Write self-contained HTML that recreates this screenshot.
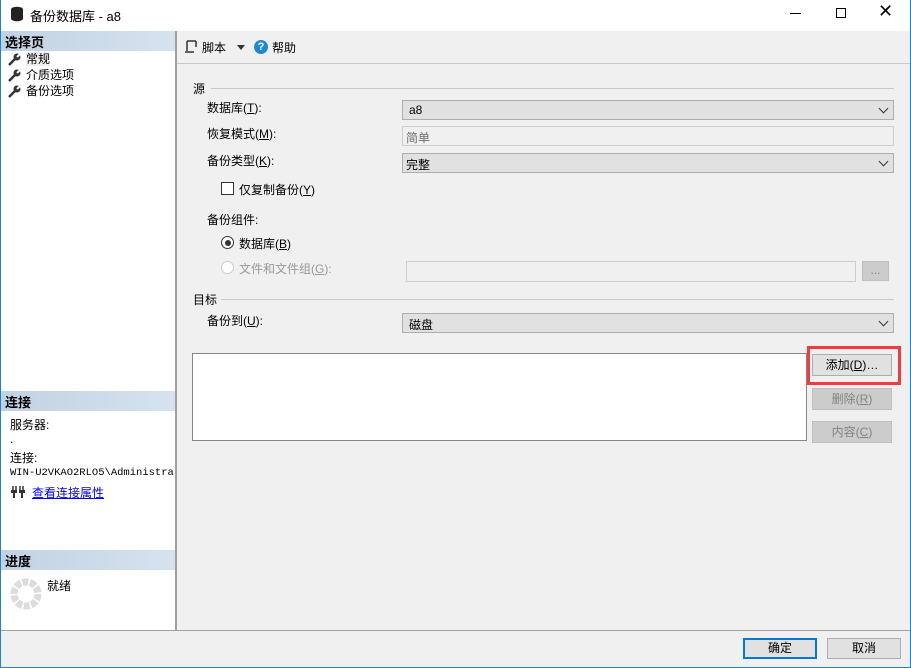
<!DOCTYPE html>
<html><head><meta charset="utf-8"><style>
*{box-sizing:border-box;margin:0;padding:0}
body{width:911px;height:668px;position:relative;overflow:hidden;background:#f0f0f0;font-family:"Liberation Sans","Noto Sans CJK SC",sans-serif;font-size:12px;color:#000}
.a{position:absolute}
.hdr{background:linear-gradient(90deg,#c1d2e3,#d6e3ef);font-weight:bold;font-size:13px;padding:1px 4px;height:20px}
.cb{background:#e1e1e1;border:1px solid #adadad;height:20px;padding:2px 6px;font-size:12px}
.cb:after{content:"";position:absolute;right:6px;top:4px;width:6px;height:6px;border-right:1px solid #333;border-bottom:1px solid #333;transform:rotate(45deg)}
.btn{background:#e1e1e1;border:1px solid #adadad;text-align:center;line-height:20px;height:22px}
.dis{background:#cccccc;border-color:#bfbfbf;color:#838383}
.line{height:1px;background:#c8c8c8}
.w{position:absolute;left:8px}
</style></head><body>
<div class="a" style="left:0;top:0;width:911px;height:31px;background:#fff"></div>
<svg class="a" style="left:10px;top:6px" width="14" height="16"><ellipse cx="7" cy="3.5" rx="6" ry="2.8" fill="#222"/><rect x="1" y="3.5" width="12" height="9" fill="#222"/><ellipse cx="7" cy="12.5" rx="6" ry="2.8" fill="#222"/></svg>
<div class="a" style="left:30px;top:6px;font-size:13px">备份数据库 - a8</div>
<div class="a" style="left:790px;top:13px;width:11px;height:1px;background:#000"></div>
<div class="a" style="left:836px;top:8px;width:10px;height:10px;border:1px solid #000"></div>
<div class="a" style="left:878px;top:1px;font-size:18px;font-weight:300">✕</div>
<div class="a" style="left:0;top:0;width:1px;height:668px;background:#1883d7"></div>
<div class="a" style="left:910px;top:0;width:1px;height:668px;background:#1883d7"></div>
<div class="a" style="left:0;top:667px;width:911px;height:1px;background:#1883d7"></div>
<div class="a" style="left:1px;top:31px;width:174px;height:599px;background:#fff;overflow:hidden">
</div>
<div class="a" style="left:175px;top:31px;width:2px;height:599px;background:#a0a0a0"></div>
<div class="a hdr" style="left:1px;top:31px;width:174px">选择页</div>
<svg class="w" style="top:53px" width="13" height="13"><path d="M1 12 L7 6" stroke="#333" stroke-width="2.5"/><circle cx="9" cy="4" r="3.5" fill="#333"/><path d="M9 4 L12 1" stroke="#fff" stroke-width="2"/></svg>
<svg class="w" style="top:69px" width="13" height="13"><path d="M1 12 L7 6" stroke="#333" stroke-width="2.5"/><circle cx="9" cy="4" r="3.5" fill="#333"/><path d="M9 4 L12 1" stroke="#fff" stroke-width="2"/></svg>
<svg class="w" style="top:85px" width="13" height="13"><path d="M1 12 L7 6" stroke="#333" stroke-width="2.5"/><circle cx="9" cy="4" r="3.5" fill="#333"/><path d="M9 4 L12 1" stroke="#fff" stroke-width="2"/></svg>
<div class="a" style="left:26px;top:51px;line-height:16px">
<div><span style="background:#f0f0f0">常规</span></div><div>介质选项</div><div>备份选项</div></div>
<div class="a hdr" style="left:1px;top:391px;width:174px">连接</div>
<div class="a" style="left:10px;top:418px;line-height:14px">服务器:<br>.</div>
<div class="a" style="left:10px;top:452px;line-height:13px;width:165px;overflow:hidden;white-space:nowrap">连接:<br><span style="font-family:'Liberation Mono',monospace;font-size:10.5px">WIN-U2VKAO2RLO5\Administrato</span></div>
<svg class="a" style="left:11px;top:486px" width="14" height="12"><path d="M2 0v4M5 0v4M9 0v4M12 0v4" stroke="#333" stroke-width="1.5"/><rect x="0" y="4" width="6" height="3" fill="#333"/><rect x="8" y="4" width="6" height="3" fill="#333"/><path d="M3 7v5M11 7v5" stroke="#333" stroke-width="2"/></svg>
<div class="a" style="left:32px;top:484px;color:#0000ff;text-decoration:underline">查看连接属性</div>
<div class="a hdr" style="left:1px;top:550px;width:174px">进度</div>
<svg class="a" style="left:10px;top:578px" width="32" height="32"><circle cx="16" cy="16" r="12" fill="none" stroke="#dcdcdc" stroke-width="7" stroke-dasharray="6 1.5"/></svg>
<div class="a" style="left:47px;top:577px">就绪</div>
<div class="a" style="left:177px;top:63px;width:733px;height:1px;background:#c8c8c8"></div>
<svg class="a" style="left:184px;top:40px" width="14" height="14"><path d="M3 1h9M3 1v10M1 12h9M12 1v6" stroke="#333" stroke-width="1.5" fill="none"/></svg>
<div class="a" style="left:202px;top:39px">脚本</div>
<div class="a" style="left:237px;top:45px;border:4px solid transparent;border-top:5px solid #333"></div>
<div class="a" style="left:254px;top:40px;width:14px;height:14px;border-radius:50%;background:#1e8ad6;color:#fff;font-weight:bold;font-size:11px;text-align:center;line-height:14px">?</div>
<div class="a" style="left:272px;top:39px">帮助</div>
<div class="a" style="left:193px;top:80px">源</div>
<div class="a line" style="left:211px;top:88px;width:683px"></div>
<div class="a" style="left:207px;top:99px">数据库(<u>T</u>):</div>
<div class="a cb" style="left:402px;top:100px;width:492px">a8</div>
<div class="a" style="left:207px;top:125px">恢复模式(<u>M</u>):</div>
<div class="a" style="left:402px;top:126px;width:492px;height:20px;border:1px solid #ccc;background:#f0f0f0;color:#6d6d6d;padding:2px 3px">简单</div>
<div class="a" style="left:207px;top:152px">备份类型(<u>K</u>):</div>
<div class="a cb" style="left:402px;top:153px;width:492px;padding-left:3px">完整</div>
<div class="a" style="left:221px;top:182px;width:13px;height:13px;border:1px solid #333;background:#fff"></div>
<div class="a" style="left:239px;top:181px">仅复制备份(<u>Y</u>)</div>
<div class="a" style="left:207px;top:211px">备份组件:</div>
<div class="a" style="left:221px;top:236px;width:13px;height:13px;border:1px solid #333;border-radius:50%;background:#fff"><div style="margin:2.5px;width:6px;height:6px;border-radius:50%;background:#333"></div></div>
<div class="a" style="left:239px;top:235px">数据库(<u>B</u>)</div>
<div class="a" style="left:221px;top:261px;width:13px;height:13px;border:1px solid #ccc;border-radius:50%;background:#fff"></div>
<div class="a" style="left:239px;top:260px;color:#999">文件和文件组(<u>G</u>):</div>
<div class="a" style="left:406px;top:261px;width:450px;height:21px;border:1px solid #ccc;background:#f0f0f0"></div>
<div class="a" style="left:862px;top:261px;width:27px;height:20px;border:1px solid #bfbfbf;background:#ccc;color:#838383;text-align:center;line-height:16px">...</div>
<div class="a" style="left:193px;top:291px">目标</div>
<div class="a line" style="left:221px;top:299px;width:673px"></div>
<div class="a" style="left:207px;top:312px">备份到(<u>U</u>):</div>
<div class="a cb" style="left:402px;top:313px;width:492px">磁盘</div>
<div class="a" style="left:192px;top:353px;width:615px;height:88px;border:1px solid #828790;background:#fff"></div>
<div class="a" style="left:807px;top:346px;width:94px;height:39px;border:3px solid #f03c3c"></div>
<div class="a btn" style="left:812px;top:354px;width:80px">添加(<u>D</u>)…</div>
<div class="a btn dis" style="left:812px;top:388px;width:80px">删除(<u>R</u>)</div>
<div class="a btn dis" style="left:812px;top:421px;width:80px">内容(<u>C</u>)</div>
<div class="a" style="left:1px;top:630px;width:909px;height:1px;background:#a0a0a0"></div>
<div class="a btn" style="left:743px;top:638px;width:74px;height:21px;line-height:17px;border:2px solid #0078d7">确定</div>
<div class="a btn" style="left:827px;top:638px;width:74px;height:21px;line-height:19px">取消</div>
</body></html>
